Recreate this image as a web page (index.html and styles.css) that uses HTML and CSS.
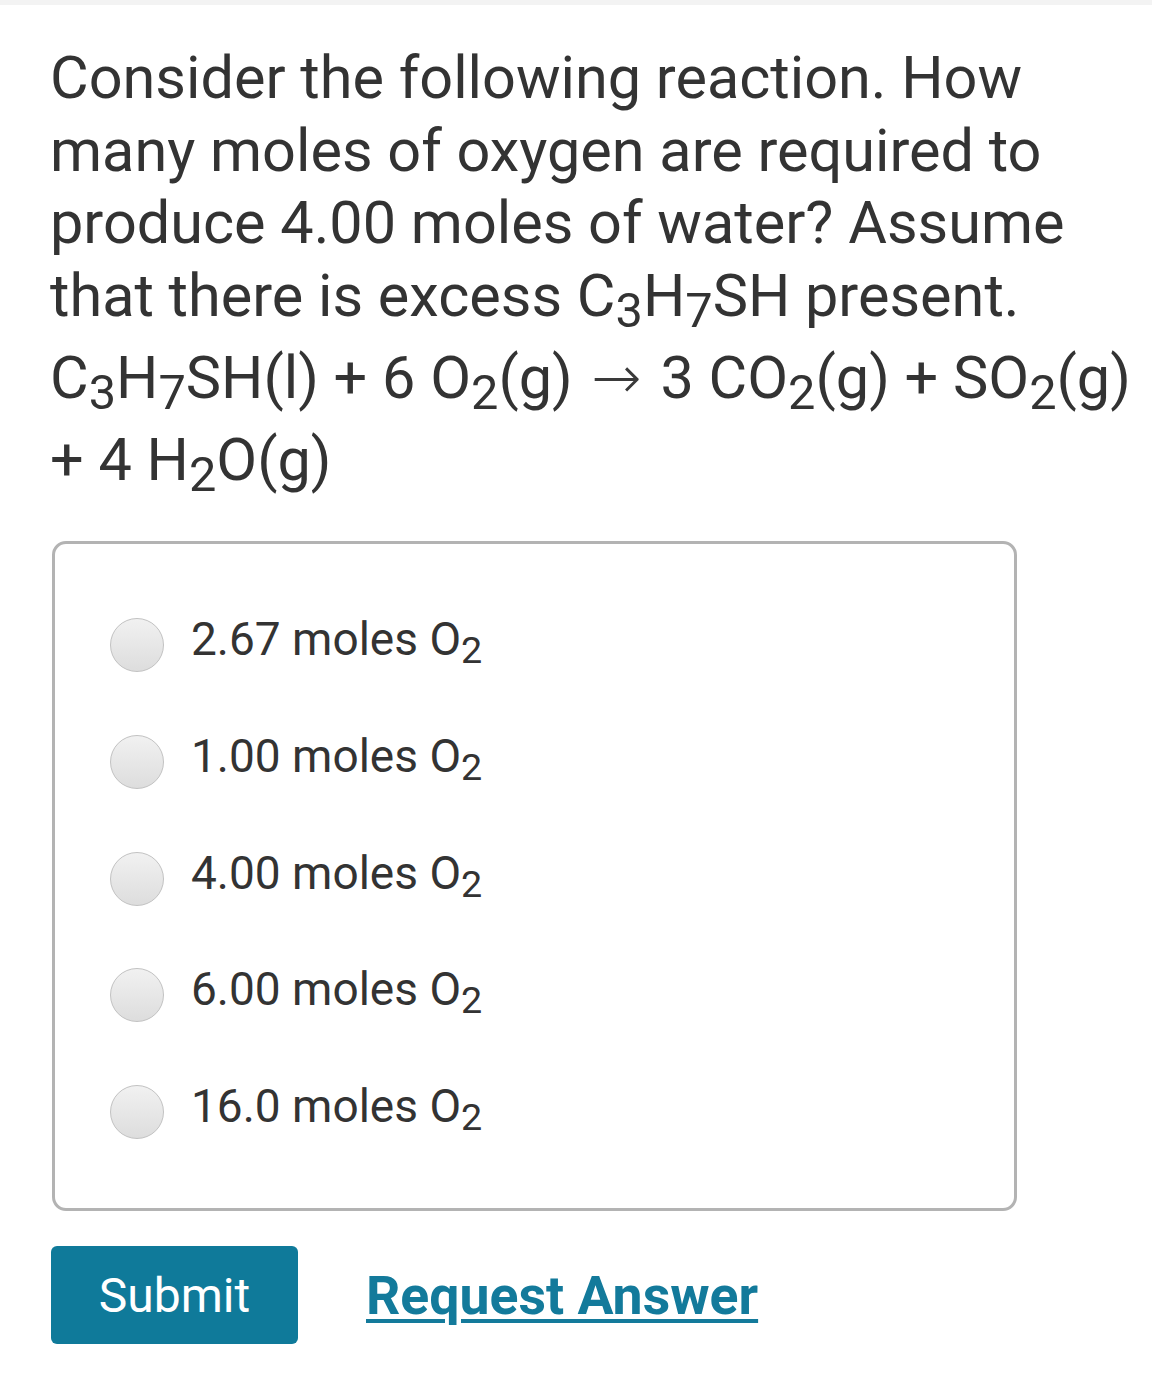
FILE: index.html
```html
<!DOCTYPE html>
<html lang="en">
<head>
<meta charset="utf-8">
<title>Question</title>
<link rel="stylesheet" href="styles.css">
</head>
<body>
<div class="topbar"></div>
<main class="content">
  <p class="question">Consider the following reaction. How many moles of oxygen are required to produce 4.00 moles of water? Assume that there is excess C<sub>3</sub>H<sub>7</sub>SH present.</p>
  <p class="equation">C<sub>3</sub>H<sub>7</sub>SH(l) + 6 O<sub>2</sub>(g) <span class="arrow">&rarr;</span> 3 CO<sub>2</sub>(g) + SO<sub>2</sub>(g) + 4 H<sub>2</sub>O(g)</p>
  <div class="choices">
    <label class="choice"><span class="radio"></span><span class="choice-text">2.67 moles O<sub>2</sub></span></label>
    <label class="choice"><span class="radio"></span><span class="choice-text">1.00 moles O<sub>2</sub></span></label>
    <label class="choice"><span class="radio"></span><span class="choice-text">4.00 moles O<sub>2</sub></span></label>
    <label class="choice"><span class="radio"></span><span class="choice-text">6.00 moles O<sub>2</sub></span></label>
    <label class="choice"><span class="radio"></span><span class="choice-text">16.0 moles O<sub>2</sub></span></label>
  </div>
  <div class="actions">
    <button class="submit" type="button">Submit</button>
    <a class="request" href="#">Request Answer</a>
  </div>
</main>
</body>
</html>
```

FILE: styles.css
```css
html, body {
  margin: 0;
  padding: 0;
  background: #ffffff;
}

body {
  font-family: Roboto, "Noto Sans", "Liberation Sans", sans-serif;
  color: #333333;
}

.topbar {
  height: 5px;
  background: #f3f3f3;
}

.content {
  padding: 0 10px 40px 50px;
}

.question {
  margin: 37px 0 5px;
  font-size: 59.4px;
  line-height: 72.5px;
}

.equation {
  margin: 0;
  font-size: 59.4px;
  line-height: 82px;
}

sub {
  font-size: 0.82em;
  line-height: 0;
  vertical-align: -0.22em;
}

.arrow {
  font-family: "DejaVu Sans", sans-serif;
  font-weight: 200;
  font-size: 60px;
  line-height: 0;
  margin: 0 4px;
  color: #3a3a3a;
}

.choices {
  margin: 40px 0 0 2px;
  width: 965px;
  box-sizing: border-box;
  border: 3px solid #b3b3b3;
  border-radius: 14px;
  padding: 68px 0 68px 55px;
  display: flex;
  flex-direction: column;
  gap: 55.75px;
}

.choice {
  display: flex;
  align-items: flex-start;
  gap: 27px;
  height: 61px;
}

.radio {
  flex: none;
  width: 54px;
  height: 54px;
  margin-top: 6px;
  box-sizing: border-box;
  border-radius: 50%;
  border: 1.5px solid #c2c2c2;
  background: linear-gradient(#f1f1f1, #dddddd);
}

.choice-text {
  font-size: 46px;
  line-height: 54px;
  color: #333333;
}

.actions {
  margin: 35px 0 0 1px;
  display: flex;
  align-items: center;
  gap: 68px;
}

.submit {
  width: 247px;
  height: 98px;
  border: none;
  border-radius: 6px;
  background: #0f7a9a;
  color: #ffffff;
  font-family: Roboto, "Noto Sans", sans-serif;
  font-size: 48px;
  padding: 0;
}

.request {
  font-family: Roboto, "Noto Sans", sans-serif;
  font-weight: 700;
  font-size: 53.6px;
  color: #137a9b;
  text-decoration: underline;
  text-decoration-thickness: 4px;
  text-underline-offset: 5px;
}
```
